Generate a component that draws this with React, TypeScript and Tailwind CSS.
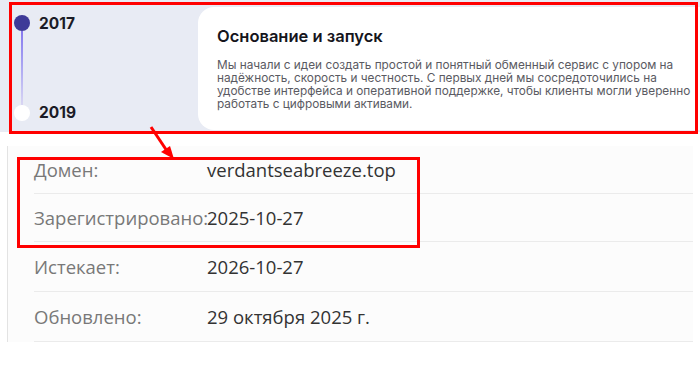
import React from "react";

export default function App() {
  const rows: [string, string][] = [
    ["Домен:", "verdantseabreeze.top"],
    ["Зарегистрировано:", "2025-10-27"],
    ["Истекает:", "2026-10-27"],
    ["Обновлено:", "29 октября 2025 г."],
  ];
  const heights = ["h-[48px]", "h-[48px]", "h-[50px]", "h-[50px]"];
  return (
    <div className="relative w-[700px] h-[374px] bg-white overflow-hidden">
      {/* Top timeline panel */}
      <div className="flex h-[132px] bg-[#e8ebf4]" style={{ fontFamily: "Inter, 'Noto Sans', sans-serif" }}>
        <div className="w-[198px] shrink-0 flex pl-[14px] pt-[15px] pb-[11px]">
          <div className="flex flex-col items-center w-[16px]">
            <div className="w-[16px] h-[16px] rounded-full bg-[#3e3a98]" />
            <div className="w-[2px] flex-1 bg-gradient-to-b from-[#8678ee] to-[#d9d6f3]" />
            <div className="w-[16px] h-[16px] rounded-full bg-white" />
          </div>
          <div className="flex flex-col justify-between ml-[9px] text-[15.5px] font-bold text-[#1b1b26] leading-[16px] pt-[1px] pb-[0px]">
            <span>2017</span>
            <span>2019</span>
          </div>
        </div>
        <div className="flex-1 mt-[7px] mb-[2px] rounded-l-[16px] bg-white pl-[19px] pt-[18px]">
          <div className="text-[16.5px] font-semibold text-[#15151c] leading-[22px]">Основание и запуск</div>
          <p className="mt-[12px] text-[11.8px] leading-[13px] text-[#5a5a62] w-[480px]">
            Мы начали с идеи создать простой и понятный обменный сервис с упором на надёжность, скорость и честность. С первых дней мы сосредоточились на удобстве интерфейса и оперативной поддержке, чтобы клиенты могли уверенно работать с цифровыми активами.
          </p>
        </div>
      </div>

      {/* Bottom whois panel */}
      <div
        className="mt-[14px] ml-[7px] w-[686px] bg-[#fcfcfc] border-l border-[#e3e3e3] pl-[26px]"
        style={{ fontFamily: "'Open Sans', sans-serif" }}
      >
        {rows.map(([k, v], i) => (
          <div key={k} className={`flex items-center border-b border-[#ebebeb] ${heights[i]} text-[18.5px]`}>
            <div className="w-[173px] shrink-0 whitespace-nowrap text-[#787878]">{k}</div>
            <div className="text-[#333333] whitespace-nowrap">{v}</div>
          </div>
        ))}
      </div>

      {/* Annotations */}
      <div className="absolute left-[9px] top-[2px] w-[689px] h-[132px] border-[3px] border-[#ff0000]" />
      <div className="absolute left-[17px] top-[157px] w-[403px] h-[91px] border-[3px] border-[#ff0000]" />
      <svg className="absolute left-0 top-0" width="700" height="374">
        <line x1="151" y1="127" x2="167" y2="151" stroke="#ff0000" strokeWidth="3" />
        <polygon points="174,159 161,152 170,146" fill="#ff0000" />
      </svg>
    </div>
  );
}
